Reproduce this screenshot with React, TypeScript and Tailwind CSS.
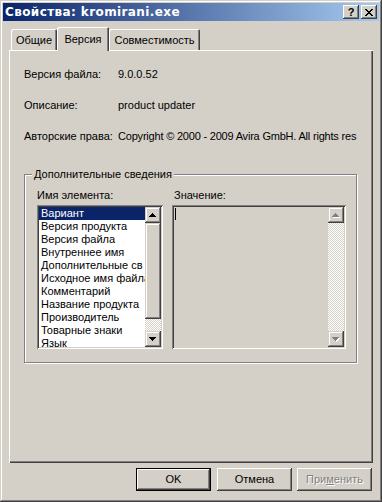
import React from 'react';

const items = [
  'Вариант',
  'Версия продукта',
  'Версия файла',
  'Внутреннее имя',
  'Дополнительные св',
  'Исходное имя файла',
  'Комментарий',
  'Название продукта',
  'Производитель',
  'Товарные знаки',
  'Язык',
];

function Arrow({ down, disabled }: { down?: boolean; disabled?: boolean }) {
  const d = down
    ? 'M0 0h7v1h-7z M1 1h5v1h-5z M2 2h3v1h-3z M3 3h1v1h-1z'
    : 'M3 0h1v1h-1z M2 1h3v1h-3z M1 2h5v1h-5z M0 3h7v1h-7z';
  return (
    <svg width="8" height="5" viewBox="0 0 8 5" shapeRendering="crispEdges">
      {disabled && <path d={d} transform="translate(1 1)" fill="#ffffff" />}
      <path d={d} fill={disabled ? '#808080' : '#000000'} />
    </svg>
  );
}

function ScrollButton({ down, disabled }: { down?: boolean; disabled?: boolean }) {
  return (
    <div className="w-[16px] h-[16px] shrink-0 flex items-center justify-center bg-[#d4d0c8] shadow-[inset_-1px_-1px_#404040,inset_1px_1px_#d4d0c8,inset_-2px_-2px_#808080,inset_2px_2px_#fff]">
      <Arrow down={down} disabled={disabled} />
    </div>
  );
}

function ScrollBar({ thumb, disabled }: { thumb?: boolean; disabled?: boolean }) {
  return (
    <div className="w-[16px] h-full flex flex-col shrink-0">
      <ScrollButton disabled={disabled} />
      <div className="flex-1 flex flex-col bg-[image:repeating-conic-gradient(#d4d0c8_0%_25%,#ffffff_0%_50%)] bg-size-[2px_2px]">
        {thumb && (
          <div className="w-[16px] h-[96px] bg-[#d4d0c8] shadow-[inset_-1px_-1px_#404040,inset_1px_1px_#d4d0c8,inset_-2px_-2px_#808080,inset_2px_2px_#fff]" />
        )}
      </div>
      <ScrollButton down disabled={disabled} />
    </div>
  );
}

function Row({ label, value, tight }: { label: string; value: string; tight?: boolean }) {
  return (
    <div className="flex h-[13px] whitespace-nowrap">
      <div className="w-[94px] shrink-0">{label}</div>
      <div className={tight ? 'flex-1 overflow-hidden tracking-[-0.2px]' : 'flex-1 overflow-hidden'}>{value}</div>
    </div>
  );
}

export default function App() {
  return (
    <div className="w-[382px] h-[502px] bg-[#d4d0c8] p-[3px] flex flex-col shadow-[inset_-1px_-1px_#404040,inset_1px_1px_#d4d0c8,inset_-2px_-2px_#808080,inset_2px_2px_#fff] font-['Liberation_Sans',Arial,sans-serif] text-[11px] leading-[13px] text-black select-none">
      {/* title bar */}
      <div className="h-[18px] flex items-center pl-[2px] pr-[2px] bg-[linear-gradient(to_right,#0a246a,#a6caf0)]">
        <span className="flex-1 text-white font-bold font-['DejaVu_Sans',sans-serif] text-[12px] tracking-[0.4px] whitespace-nowrap">
          Свойства: kromirani.exe
        </span>
        <div className="flex gap-[2px]">
          <div className="w-[16px] h-[14px] flex items-center justify-center bg-[#d4d0c8] shadow-[inset_-1px_-1px_#404040,inset_1px_1px_#fff,inset_-2px_-2px_#808080] font-bold text-[11px] leading-[11px] pt-[1px]">
            ?
          </div>
          <div className="w-[16px] h-[14px] flex items-center justify-center bg-[#d4d0c8] shadow-[inset_-1px_-1px_#404040,inset_1px_1px_#fff,inset_-2px_-2px_#808080]">
            <svg width="8" height="7" viewBox="0 0 8 7" shapeRendering="crispEdges">
              <path
                d="M0 0h2v1h-2z M6 0h2v1h-2z M1 1h2v1h-2z M5 1h2v1h-2z M2 2h4v1h-4z M3 3h2v1h-2z M2 4h4v1h-4z M1 5h2v1h-2z M5 5h2v1h-2z M0 6h2v1h-2z M6 6h2v1h-2z"
                fill="#000"
              />
            </svg>
          </div>
        </div>
      </div>

      <div className="flex flex-col px-[6px] pt-[6px]">
        {/* tabs */}
        <div className="flex items-end h-[23px] pl-[2px]">
          <div className="w-[46px] h-[21px] pt-[2px] flex items-center justify-center rounded-t-[2px] shadow-[inset_1px_1px_#fff,inset_-1px_0_#404040,inset_-2px_0_#808080]">
            Общие
          </div>
          <div className="relative z-10 w-[52px] h-[24px] -mb-[1px] flex items-center justify-center bg-[#d4d0c8] rounded-t-[2px] shadow-[inset_1px_1px_#fff,inset_-1px_0_#404040,inset_-2px_0_#808080]">
            Версия
          </div>
          <div className="w-[91px] h-[21px] pt-[2px] flex items-center justify-center rounded-t-[2px] shadow-[inset_1px_1px_#fff,inset_-1px_0_#404040,inset_-2px_0_#808080]">
            Совместимость
          </div>
        </div>

        {/* panel */}
        <div className="h-[413px] pt-[18px] pl-[15px] pr-[16px] shadow-[inset_1px_1px_#fff,inset_-1px_-1px_#404040,inset_-2px_-2px_#808080]">
          <div className="flex flex-col gap-[18px]">
            <Row label="Версия файла:" value="9.0.0.52" />
            <Row label="Описание:" value="product updater" />
            <Row label="Авторские права:" value="Copyright © 2000 - 2009 Avira GmbH. All rights res" tight />
          </div>

          <div className="relative mt-[31px] border border-[#808080] shadow-[inset_1px_1px_#fff,1px_1px_#fff] pt-[14px] pl-[12px] pr-[10px] pb-[13px]">
            <span className="absolute -top-[7px] left-[7px] px-[2px] bg-[#d4d0c8] whitespace-nowrap">
              Дополнительные сведения
            </span>
            <div className="flex gap-[9px]">
              <div className="flex flex-col w-[126px]">
                <div className="h-[13px]">Имя элемента:</div>
                <div className="mt-[3px] h-[144px] p-[2px] bg-white flex shadow-[inset_1px_1px_#808080,inset_-1px_-1px_#fff,inset_2px_2px_#404040,inset_-2px_-2px_#d4d0c8]">
                  <div className="flex-1 overflow-hidden flex flex-col">
                    {items.map((it, i) => (
                      <div
                        key={it}
                        className={
                          i === 0
                            ? 'h-[13px] shrink-0 px-[2px] whitespace-nowrap bg-[#0a246a] text-white'
                            : 'h-[13px] shrink-0 px-[2px] whitespace-nowrap'
                        }
                      >
                        {it}
                      </div>
                    ))}
                  </div>
                  <ScrollBar thumb />
                </div>
              </div>

              <div className="flex flex-col w-[175px]">
                <div className="h-[13px] pl-[2px]">Значение:</div>
                <div className="mt-[3px] h-[144px] p-[2px] bg-[#d4d0c8] flex shadow-[inset_1px_1px_#808080,inset_-1px_-1px_#fff,inset_2px_2px_#404040,inset_-2px_-2px_#d4d0c8]">
                  <div className="flex-1">
                    <div className="ml-[1px] mt-[1px] w-[1px] h-[12px] bg-black" />
                  </div>
                  <ScrollBar disabled />
                </div>
              </div>
            </div>
          </div>
        </div>

        {/* buttons */}
        <div className="mt-[5px] flex justify-end pr-[1px]">
          <button className="w-[75px] h-[23px] border border-black bg-[#d4d0c8] shadow-[inset_-1px_-1px_#404040,inset_1px_1px_#fff,inset_-2px_-2px_#808080]">
            OK
          </button>
          <button className="ml-[6px] w-[75px] h-[23px] bg-[#d4d0c8] shadow-[inset_-1px_-1px_#404040,inset_1px_1px_#fff,inset_-2px_-2px_#808080]">
            Отмена
          </button>
          <button className="ml-[5px] w-[75px] h-[23px] bg-[#d4d0c8] text-[#808080] [text-shadow:1px_1px_#fff] shadow-[inset_-1px_-1px_#404040,inset_1px_1px_#fff,inset_-2px_-2px_#808080]">
            При<span className="underline">м</span>енить
          </button>
        </div>
      </div>
    </div>
  );
}
